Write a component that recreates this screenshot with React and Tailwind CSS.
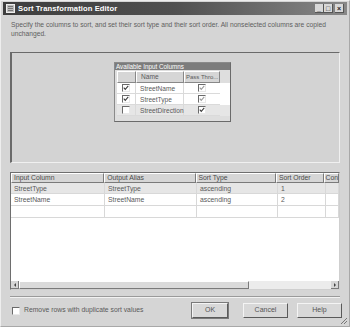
import React from 'react';

const FONT = { fontFamily: '"Liberation Sans", Arial, sans-serif' };

const COLS = [
  { label: 'Input Column', w: 'w-[94px]' },
  { label: 'Output Alias', w: 'w-[92px]' },
  { label: 'Sort Type', w: 'w-[81px]' },
  { label: 'Sort Order', w: 'w-[48px]' },
  { label: 'Con', w: 'flex-1' },
];

const ROWS = [
  ['StreetType', 'StreetType', 'ascending', '1', ''],
  ['StreetName', 'StreetName', 'ascending', '2', ''],
  ['', '', '', '', ''],
];

const INPUTS = [
  { name: 'StreetName', used: true, pass: true, passDim: true },
  { name: 'StreetType', used: true, pass: true, passDim: true },
  { name: 'StreetDirection', used: false, pass: true, passDim: false },
];

function Check({ checked, dim }) {
  return (
    <span className="w-[8px] h-[8px] border-t border-l border-[#6a6a6a] border-r border-b border-r-[#e8e8e8] border-b-[#e8e8e8] bg-white flex items-center justify-center shrink-0">
      {checked && (
        <svg viewBox="0 0 8 8" className="w-[6px] h-[6px]">
          <path d="M1 3.5 L3 5.8 L7 1.2" fill="none" stroke={dim ? '#9a9a9a' : '#3a3a3a'} strokeWidth="1.4" />
        </svg>
      )}
    </span>
  );
}

function TitleButton({ children }) {
  return (
    <span className="w-[9px] h-[9px] bg-[#d8d8d8] border-r border-b border-[#555] flex items-center justify-center text-[7px] leading-none text-[#222] font-bold">
      {children}
    </span>
  );
}

function InputColumns() {
  return (
    <div className="w-[117px] h-[60px] bg-[#dedede] border border-[#8a8a8a] border-r-[#6a6a6a] border-b-[#6a6a6a] flex flex-col">
      <div className="h-[7px] bg-[#7c7c7c] text-white text-[6.3px] leading-[7px] pl-[1px] whitespace-nowrap">
        Available Input Columns
      </div>
      <div className="ml-[2px] mt-[1px] flex flex-col text-[6.6px] text-[#5a5a5a]">
        <div className="flex h-[12px]">
          <div className="w-[19px] bg-[#d6d6d6] border-t border-l border-white border-r border-b border-r-[#888] border-b-[#888]" />
          <div className="w-[48px] bg-[#d6d6d6] border-t border-l border-white border-r border-b border-r-[#888] border-b-[#888] pl-[4px] leading-[10px]">
            Name
          </div>
          <div className="w-[36px] bg-[#d6d6d6] border-t border-l border-white border-r border-b border-r-[#888] border-b-[#888] pl-[1px] text-[6px] leading-[10px] whitespace-nowrap">
            Pass Thro...
          </div>
        </div>
        {INPUTS.map((r, i) => (
          <div key={r.name} className={`flex h-[11px] ${i === 2 ? 'bg-[#e6e6e6]' : 'bg-white'}`}>
            <div className="w-[19px] flex items-center justify-center border-r border-b border-[#dadada]">
              <Check checked={r.used} />
            </div>
            <div className="w-[48px] pl-[4px] leading-[11px] border-r border-b border-[#dadada] whitespace-nowrap">
              {r.name}
            </div>
            <div className="w-[36px] flex items-center justify-center border-b border-[#dadada]">
              <Check checked={r.pass} dim={r.passDim} />
            </div>
          </div>
        ))}
      </div>
    </div>
  );
}

function SortGrid() {
  return (
    <div className="mx-[9px] mt-[9px] h-[118px] flex flex-col border border-[#6e6e6e] border-r-[#cfcfcf] border-b-[#cfcfcf] bg-white text-[6.8px] text-[#5a5a5a]">
      <div className="flex h-[10px] bg-[#d6d6d6] text-[#4a4a4a]">
        {COLS.map((c, j) => (
          <div
            key={c.label}
            className={`${c.w} border-t border-l border-white border-r border-b border-r-[#7a7a7a] border-b-[#7a7a7a] ${j === 4 ? 'pl-[1px]' : 'pl-[2px]'} leading-[8px] whitespace-nowrap`}
          >
            {c.label}
          </div>
        ))}
      </div>
      {ROWS.map((row, i) => (
        <div key={i} className={`flex ${i === 0 ? 'h-[11px] bg-[#e6e6e6]' : 'h-[12px] bg-white'}`}>
          {row.map((cell, j) => (
            <div
              key={j}
              className={`${COLS[j].w} border-r border-b border-[#d8d8d8] pl-[3px] leading-[11px] whitespace-nowrap`}
            >
              {cell}
            </div>
          ))}
        </div>
      ))}
      <div className="flex-1" />
      {/* horizontal scrollbar */}
      <div className="flex h-[8px] bg-[#ececec]">
        <div className="w-[8px] bg-[#d6d6d6] border-r border-b border-[#7a7a7a] flex items-center justify-center">
          <span className="w-0 h-0 border-y-[2px] border-y-transparent border-r-[2px] border-r-[#444]" />
        </div>
        <div className="w-[230px] bg-[#dadada] border-t border-l border-white border-r border-b border-r-[#7a7a7a] border-b-[#7a7a7a]" />
        <div className="flex-1" />
        <div className="w-[8px] bg-[#d6d6d6] border-r border-b border-[#7a7a7a] flex items-center justify-center">
          <span className="w-0 h-0 border-y-[2px] border-y-transparent border-l-[2px] border-l-[#444]" />
        </div>
      </div>
    </div>
  );
}

function Button({ children, w, focus }) {
  return (
    <button
      className={`${w} h-[15px] bg-[#d8d8d8] text-[7px] text-[#555] border-t border-l border-[#f4f4f4] border-r border-b border-r-[#5a5a5a] border-b-[#5a5a5a] ${focus ? 'outline outline-1 outline-[#7a7a7a]' : ''}`}
    >
      {children}
    </button>
  );
}

export default function App() {
  return (
    <div
      style={FONT}
      className="w-[350px] h-[327px] bg-[#d5d5d5] border border-[#a8a8a8] border-t-[#eeeeee] border-l-[#eeeeee] flex flex-col overflow-hidden relative"
    >
      {/* title bar */}
      <div className="mx-[2px] mt-[1px] h-[13px] bg-gradient-to-r from-[#3e3e3e] via-[#505050] to-[#888888] flex items-center pl-[3px] pr-[3px]">
        <span className="w-[9px] h-[9px] bg-[#bdbdbd] border border-[#eee] mr-[3px] flex flex-col justify-center gap-[1px] px-[1px]">
          <span className="h-[1px] bg-[#777]" />
          <span className="h-[1px] bg-[#777]" />
          <span className="h-[1px] bg-[#777]" />
        </span>
        <span className="text-white font-bold text-[7.6px] leading-none tracking-[0.1px]">Sort Transformation Editor</span>
        <div className="ml-auto flex items-center">
          <TitleButton>_</TitleButton>
          <TitleButton>□</TitleButton>
          <span className="w-[2px]" />
          <TitleButton>×</TitleButton>
        </div>
      </div>

      {/* description */}
      <p className="px-[10px] mt-[5px] text-[6.7px] leading-[9px] text-[#606060]">
        Specify the columns to sort, and set their sort type and their sort order. All nonselected columns are copied
        unchanged.
      </p>

      {/* design surface */}
      <div className="mx-[9px] mt-[14px] h-[111px] bg-[#d3d3d3] border-t border-t-[#6a6a6a] border-l-2 border-l-[#6a6a6a] border-r border-r-[#f0f0f0] border-b border-b-[#f0f0f0] flex justify-center pt-[9px] pr-[6px]">
        <InputColumns />
      </div>

      <SortGrid />

      {/* separator */}
      <div className="mx-[9px] mt-[6px] h-[2px] border-t border-[#9a9a9a] border-b border-b-[#f2f2f2]" />

      {/* bottom row */}
      <div className="mt-[5px] flex items-center pl-[11px] pr-[7px]">
        <Check checked={false} />
        <span className="ml-[4px] text-[6.8px] text-[#5a5a5a]">Remove rows with duplicate sort values</span>
        <div className="ml-auto flex items-center">
          <Button w="w-[36px]" focus>OK</Button>
          <span className="w-[15px]" />
          <Button w="w-[45px]">Cancel</Button>
          <span className="w-[9px]" />
          <Button w="w-[45px]">Help</Button>
        </div>
      </div>

      {/* resize grip */}
      <svg className="absolute right-[1px] bottom-[1px] w-[9px] h-[9px]" viewBox="0 0 9 9">
        <path d="M8 2 L2 8 M8 5 L5 8 M8 8 L8 8" stroke="#777" strokeWidth="1" />
      </svg>
    </div>
  );
}
